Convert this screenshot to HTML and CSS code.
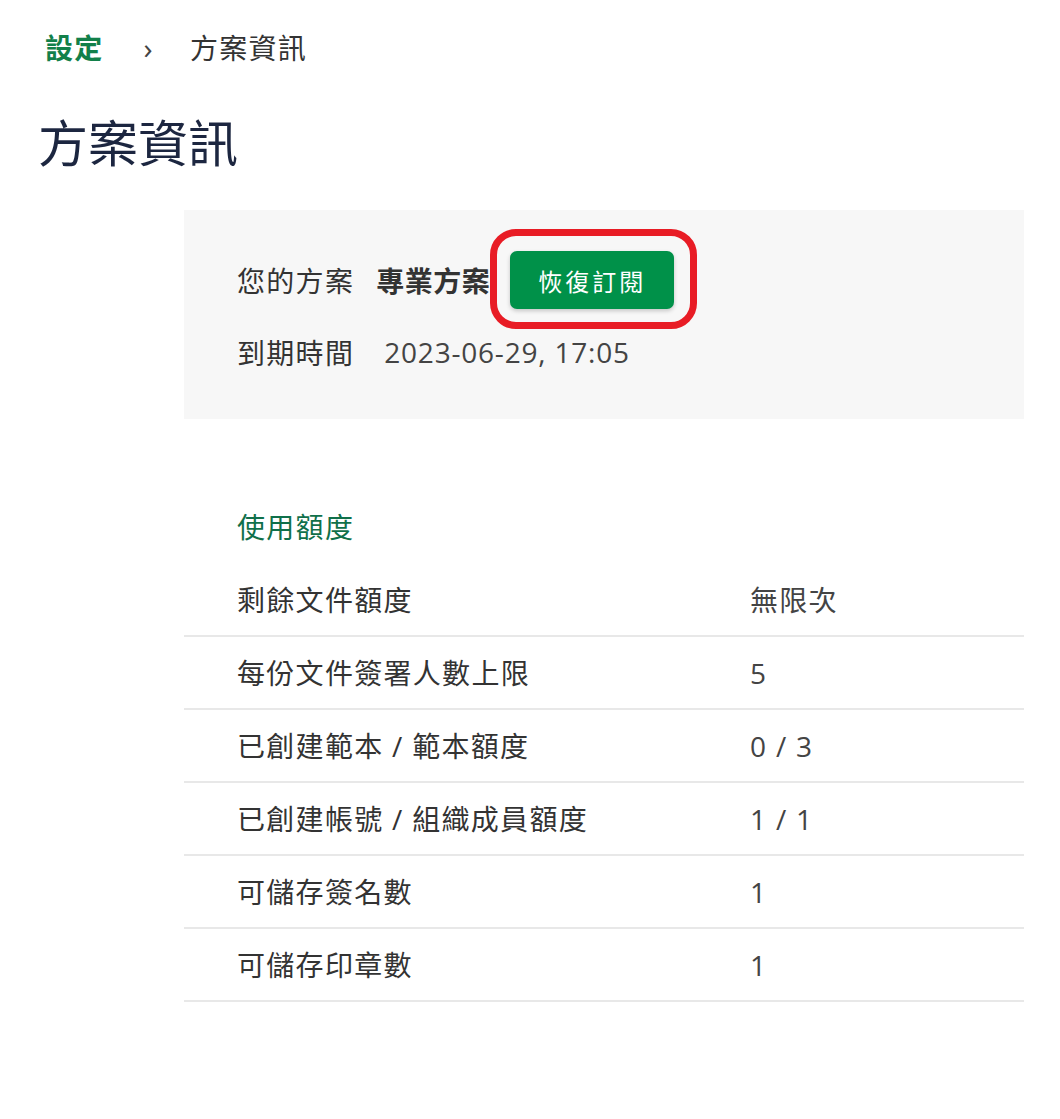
FILE: index.html
```html
<!DOCTYPE html>
<html lang="zh-Hant">
<head>
    <meta charset="UTF-8">
    <meta name="viewport" content="width=device-width, initial-scale=1.0">
    <title>方案資訊</title>
    <link rel="stylesheet" href="styles.css">
</head>
<body>
    <div class="breadcrumb">
        <a class="crumb-link" href="#">設定</a>
        <span class="crumb-sep">›</span>
        <span class="crumb-current">方案資訊</span>
    </div>

    <h1 class="page-title">方案資訊</h1>

    <div class="content">
        <div class="plan-box">
            <div class="plan-row">
                <span class="plan-label">您的方案</span>
                <span class="plan-name">專業方案</span>
                <span class="btn-wrap">
                    <button class="btn-renew">恢復訂閱</button>
                    <span class="highlight-ring"></span>
                </span>
            </div>
            <div class="plan-row">
                <span class="plan-label">到期時間</span>
                <span class="plan-date">2023-06-29, 17:05</span>
            </div>
        </div>

        <h2 class="section-title">使用額度</h2>

        <div class="quota-table">
            <div class="quota-row">
                <span class="quota-name">剩餘文件額度</span>
                <span class="quota-value">無限次</span>
            </div>
            <div class="quota-row">
                <span class="quota-name">每份文件簽署人數上限</span>
                <span class="quota-value">5</span>
            </div>
            <div class="quota-row">
                <span class="quota-name">已創建範本 / 範本額度</span>
                <span class="quota-value">0 / 3</span>
            </div>
            <div class="quota-row">
                <span class="quota-name">已創建帳號 / 組織成員額度</span>
                <span class="quota-value">1 / 1</span>
            </div>
            <div class="quota-row">
                <span class="quota-name">可儲存簽名數</span>
                <span class="quota-value">1</span>
            </div>
            <div class="quota-row">
                <span class="quota-name">可儲存印章數</span>
                <span class="quota-value">1</span>
            </div>
        </div>
    </div>
</body>
</html>
```

FILE: styles.css
```css
body {
    margin: 0;
    padding: 27px 36px 0 38px;
    font-family: "Open Sans", "Noto Sans CJK TC", sans-serif;
    color: #333;
    background: #fff;
    letter-spacing: 1.3px;
}

.breadcrumb {
    display: flex;
    align-items: center;
    padding-left: 7px;
    font-size: 28px;
    line-height: 42px;
}

.crumb-link {
    color: #12804a;
    font-weight: bold;
    text-decoration: none;
}

.crumb-sep {
    margin: 0 36px 0 40px;
    font-size: 30px;
    color: #444;
}

.crumb-current {
    color: #333;
}

.page-title {
    margin: 39px 0 0 0;
    font-size: 50px;
    font-weight: normal;
    line-height: 70px;
    color: #1c2640;
    letter-spacing: 0;
}

.content {
    margin: 32px 0 0 146px;
}

.plan-box {
    background: #f7f7f7;
    padding: 41px 53px 46px;
}

.plan-row {
    display: flex;
    align-items: center;
    font-size: 28px;
    min-height: 42px;
}

.plan-row + .plan-row {
    margin-top: 22px;
}

.plan-label {
    margin-right: 22px;
}

.plan-name {
    font-weight: bold;
    letter-spacing: 0.5px;
}

.plan-date {
    margin-left: 8px;
    color: #444;
    letter-spacing: 0.8px;
}

.btn-wrap {
    position: relative;
    margin-left: 20px;
}

.btn-renew {
    display: block;
    width: 164px;
    height: 58px;
    border: none;
    border-radius: 7px;
    background: #009149;
    color: #fff;
    font-family: "Noto Sans CJK TC", sans-serif;
    font-size: 24px;
    letter-spacing: 3px;
    box-shadow: 0 2px 4px rgba(0, 0, 0, 0.2);
}

.highlight-ring {
    position: absolute;
    top: -22px;
    left: -20px;
    right: -23px;
    bottom: -20px;
    border: 7px solid #e81c25;
    border-radius: 26px;
}

.section-title {
    margin: 87px 0 16px 53px;
    font-size: 28px;
    font-weight: normal;
    line-height: 42px;
    color: #10704a;
}

.quota-row {
    display: grid;
    grid-template-columns: 513px 1fr;
    padding: 15px 0 14px 53px;
    border-bottom: 2px solid #e8e8e8;
    font-size: 28px;
    line-height: 42px;
}

.quota-value {
    color: #444;
}
```
